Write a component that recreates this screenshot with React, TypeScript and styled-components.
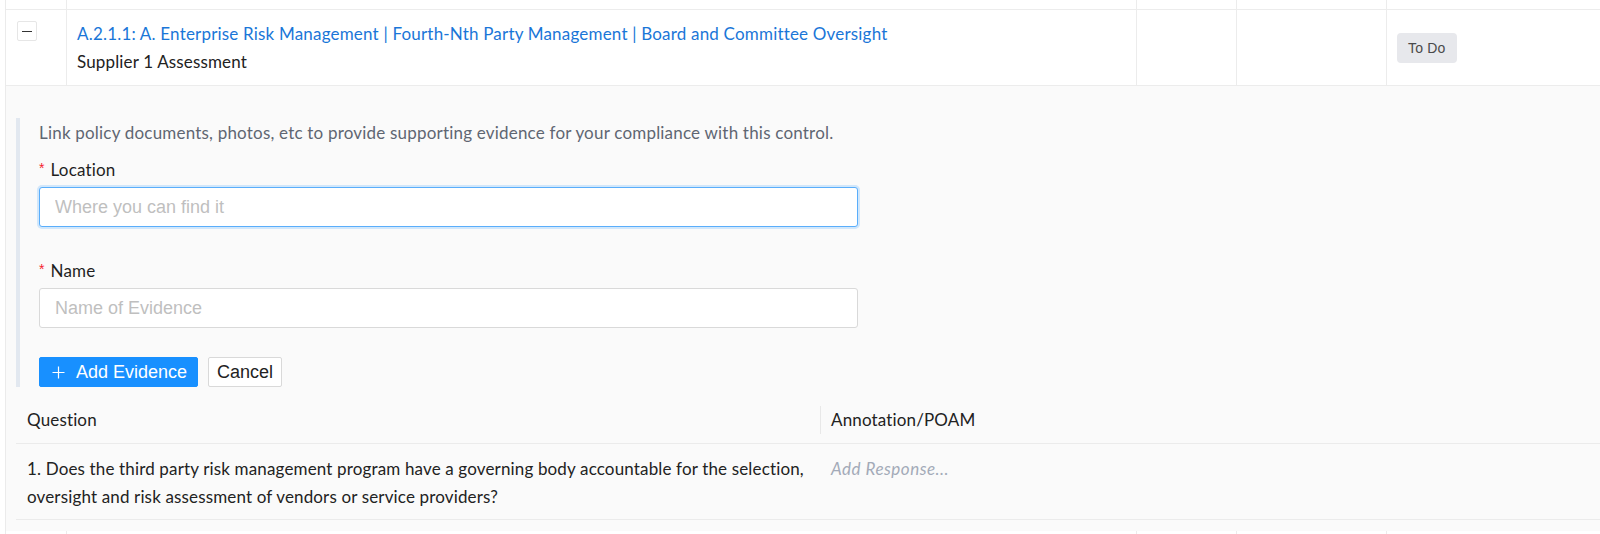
import React from 'react';
import styled, { createGlobalStyle } from 'styled-components';

const GlobalStyle = createGlobalStyle`
  html, body {
    margin: 0;
    padding: 0;
    background: #ffffff;
  }
  * {
    box-sizing: border-box;
  }
`;

const Page = styled.div`
  padding-left: 5px;
  font-family: Lato, 'Open Sans', sans-serif;
  letter-spacing: 0.15px;
  color: #222;
  overflow: hidden;
`;

const Table = styled.div`
  border-left: 1px solid #ebebeb;
`;

// grid shared by the control rows
const Row = styled.div<{ $height?: number }>`
  display: grid;
  grid-template-columns: 60px 1070px 100px 150px 1fr;
  border-bottom: 1px solid #ececec;
  background: #fff;
  ${p => (p.$height !== undefined ? `height: ${p.$height}px;` : '')}
`;

const Cell = styled.div<{ $center?: boolean; $pad?: string }>`
  padding: ${p => p.$pad || '0 10px'};
  display: flex;
  flex-direction: column;
  justify-content: ${p => (p.$center ? 'center' : 'flex-start')};
  & + & {
    border-left: 1px solid #ececec;
  }
`;

const ToggleButton = styled.button`
  width: 20px;
  height: 20px;
  padding: 0;
  border: 1px solid #e6e6e6;
  border-radius: 2px;
  background: #fff;
  display: flex;
  align-items: center;
  justify-content: center;
  cursor: pointer;

  &::before {
    content: '';
    width: 10px;
    height: 1px;
    background: #333;
  }
`;

const ControlLink = styled.a`
  font-size: 17px;
  line-height: 28px;
  letter-spacing: 0.19px;
  color: #1a76d8;
  text-decoration: none;
  white-space: nowrap;
`;

const ControlSub = styled.div`
  font-size: 17px;
  line-height: 28px;
  color: #222;
`;

const StatusBadge = styled.span`
  align-self: flex-start;
  height: 30px;
  line-height: 30px;
  padding: 0 11px;
  border-radius: 4px;
  background: #e7e8ec;
  color: #4a4a4a;
  font-family: 'Liberation Sans', Arial, sans-serif;
  font-size: 14px;
  letter-spacing: 0.2px;
`;

const Expanded = styled.div`
  background: #fafafa;
  padding: 32px 0 11px 10px;
`;

const EvidenceForm = styled.div`
  border-left: 4px solid #e2e8f0;
  padding: 3px 0 0 19px;
  width: 842px;
`;

const Hint = styled.div`
  font-size: 17px;
  line-height: 24px;
  letter-spacing: 0.2px;
  color: #5f6672;
  white-space: nowrap;
  margin-bottom: 13px;
`;

const FieldLabel = styled.label`
  display: block;
  font-size: 17px;
  line-height: 24px;
  color: #1f1f1f;
  margin-bottom: 4px;

  &::before {
    content: '*';
    color: #f5222d;
    font-family: 'Liberation Sans', Arial, sans-serif;
    font-size: 14px;
    margin-right: 6px;
    position: relative;
    top: -3px;
  }
`;

const TextInput = styled.input<{ $focused?: boolean }>`
  display: block;
  width: 100%;
  height: 40px;
  padding: 0 15px;
  border-radius: 3px;
  background: #fff;
  border: 1px solid ${p => (p.$focused ? '#5aaefb' : '#d9d9d9')};
  box-shadow: ${p => (p.$focused ? '0 0 0 2px rgba(24, 144, 255, 0.18)' : 'none')};
  font-family: 'Liberation Sans', Arial, sans-serif;
  font-size: 18px;
  letter-spacing: 0;
  color: #333;
  outline: none;

  &::placeholder {
    color: #bfbfbf;
  }
`;

const FieldGroup = styled.div<{ $gap: number }>`
  margin-bottom: ${p => p.$gap}px;
`;

const Actions = styled.div`
  display: flex;
  gap: 10px;
`;

const Button = styled.button<{ $primary?: boolean }>`
  height: 30px;
  display: inline-flex;
  align-items: center;
  gap: 11px;
  padding: ${p => (p.$primary ? '0 10px 0 12px' : '0 8px')};
  border-radius: 2px;
  border: 1px solid ${p => (p.$primary ? '#1890ff' : '#d9d9d9')};
  background: ${p => (p.$primary ? '#1890ff' : '#fff')};
  color: ${p => (p.$primary ? '#fff' : '#222')};
  font-family: 'Liberation Sans', Arial, sans-serif;
  font-size: 18px;
  letter-spacing: 0;
  cursor: pointer;
`;

const QuestionTable = styled.div`
  margin-top: 10px;
`;

const QRow = styled.div<{ $head?: boolean }>`
  display: grid;
  grid-template-columns: 804px 1fr;
  border-bottom: 1px solid #ebebeb;
  min-height: ${p => (p.$head ? '47px' : 'auto')};
`;

const QCell = styled.div<{ $head?: boolean; $divider?: boolean }>`
  position: relative;
  padding: ${p => (p.$head ? '0 11px' : '11px 11px 8px')};
  display: flex;
  align-items: ${p => (p.$head ? 'center' : 'flex-start')};
  font-size: 17px;
  line-height: 28px;
  color: #222;

  ${p =>
    p.$divider
      ? `&::before {
    content: '';
    position: absolute;
    left: 0;
    top: 9px;
    height: 28px;
    width: 1px;
    background: #e8e8e8;
  }`
      : ''}
`;

const Placeholder = styled.span`
  font-style: italic;
  letter-spacing: 0.5px;
  color: #a3aab8;
`;

const PlusIcon = () => (
  <svg width="13" height="13" viewBox="0 0 13 13" fill="none">
    <path d="M6.5 0.5v12M0.5 6.5h12" stroke="#fff" strokeWidth="1.2" />
  </svg>
);

const App: React.FC = () => {
  return (
    <Page>
      <GlobalStyle />
      <Table>
        <Row $height={10}>
          <Cell />
          <Cell />
          <Cell />
          <Cell />
          <Cell />
        </Row>

        <Row>
          <Cell $pad="11px 11px">
            <ToggleButton aria-label="collapse" />
          </Cell>
          <Cell $pad="10px 10px 9px">
            <ControlLink href="#">
              A.2.1.1: A. Enterprise Risk Management | Fourth-Nth Party Management | Board and Committee Oversight
            </ControlLink>
            <ControlSub>Supplier 1 Assessment</ControlSub>
          </Cell>
          <Cell />
          <Cell />
          <Cell $center $pad="0 10px">
            <StatusBadge>To Do</StatusBadge>
          </Cell>
        </Row>

        <Expanded>
          <EvidenceForm>
            <Hint>
              Link policy documents, photos, etc to provide supporting evidence for your compliance with this control.
            </Hint>
            <FieldGroup $gap={32}>
              <FieldLabel>Location</FieldLabel>
              <TextInput $focused placeholder="Where you can find it" />
            </FieldGroup>
            <FieldGroup $gap={29}>
              <FieldLabel>Name</FieldLabel>
              <TextInput placeholder="Name of Evidence" />
            </FieldGroup>
            <Actions>
              <Button $primary>
                <PlusIcon />
                Add Evidence
              </Button>
              <Button>Cancel</Button>
            </Actions>
          </EvidenceForm>

          <QuestionTable>
            <QRow $head>
              <QCell $head>Question</QCell>
              <QCell $head $divider>Annotation/POAM</QCell>
            </QRow>
            <QRow>
              <QCell>
                1. Does the third party risk management program have a governing body accountable for the selection,
                oversight and risk assessment of vendors or service providers?
              </QCell>
              <QCell>
                <Placeholder>Add Response...</Placeholder>
              </QCell>
            </QRow>
          </QuestionTable>
        </Expanded>

        <Row $height={30}>
          <Cell />
          <Cell />
          <Cell />
          <Cell />
          <Cell />
        </Row>
      </Table>
    </Page>
  );
};

export default App;
